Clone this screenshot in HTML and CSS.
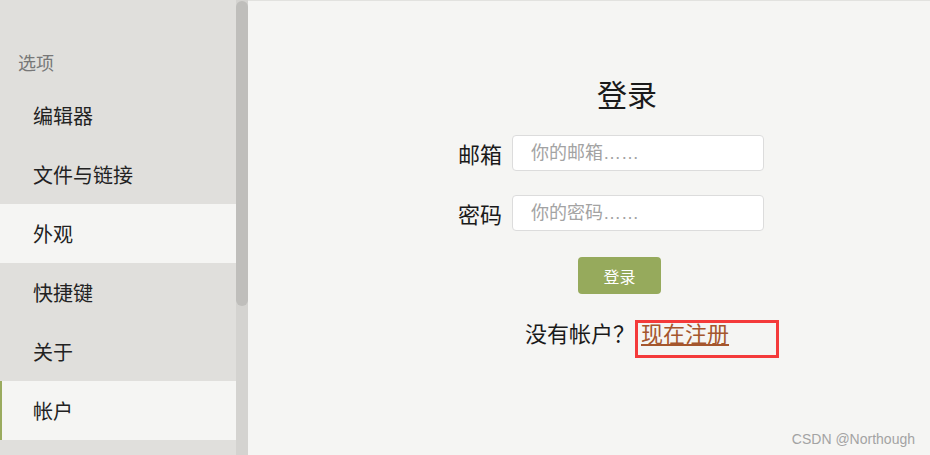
FILE: index.html
```html
<!DOCTYPE html>
<html>
  <head>
    <meta charset="utf-8">
    <title>登录</title>
    <link rel="stylesheet" href="styles.css">
  </head>
  <body>
    <div class="app">
      <div class="sidebar">
        <div class="menu">
          <div class="menu-head">选项</div>
          <div class="item">编辑器</div>
          <div class="item">文件与链接</div>
          <div class="item light">外观</div>
          <div class="item">快捷键</div>
          <div class="item">关于</div>
          <div class="item light active">帐户</div>
        </div>
        <div class="track"><div class="thumb"></div></div>
      </div>
      <div class="main">
        <h1 class="title">登录</h1>
        <div class="row">
          <label class="label">邮箱</label>
          <input class="field" type="text" placeholder="你的邮箱……">
        </div>
        <div class="row second">
          <label class="label">密码</label>
          <input class="field" type="password" placeholder="你的密码……">
        </div>
        <button class="btn">登录</button>
        <p class="signup">没有帐户？<a href="#" class="link">现在注册</a></p>
      </div>
    </div>
    <div class="mark"></div>
    <div class="watermark">CSDN @Northough</div>
  </body>
</html>
```

FILE: styles.css
```css
html, body {
  margin: 0;
  padding: 0;
}
body {
  width: 930px;
  height: 455px;
  overflow: hidden;
  font-family: "Noto Sans CJK SC", "Liberation Sans", sans-serif;
  color: #1f1f1f;
  background: #f5f5f3;
  position: relative;
}
.app {
  display: flex;
  height: 455px;
}
.sidebar {
  display: flex;
  width: 248px;
  flex: none;
}
.menu {
  width: 236px;
  background: #e0dfdc;
}
.menu-head {
  padding: 50px 0 12px 18px;
  height: 24px;
  line-height: 24px;
  font-size: 18px;
  color: #777;
}
.item {
  height: 59px;
  line-height: 59px;
  padding-left: 33px;
  font-size: 20px;
  color: #222;
}
.item.light {
  background: #f5f5f3;
}
.item.active {
  box-shadow: inset 2px 0 0 #9aab5e;
}
.track {
  width: 12px;
  background: #d4d3d0;
}
.thumb {
  margin-top: 1px;
  height: 305px;
  border-radius: 6px;
  background: #bfbebb;
}
.main {
  flex: 1;
  border-top: 1px solid #e2e2df;
  padding-left: 76px;
  display: flex;
  flex-direction: column;
  align-items: center;
}
.title {
  margin: 72px 0 0;
  height: 40px;
  line-height: 40px;
  font-size: 30px;
  font-weight: normal;
  color: #1a1a1a;
}
.row {
  display: flex;
  align-items: center;
  gap: 10px;
  margin: 22px 32px 0 0;
}
.row.second {
  margin-top: 24px;
}
.label {
  font-size: 22px;
  width: 44px;
  color: #1a1a1a;
}
.field {
  box-sizing: border-box;
  width: 252px;
  height: 36px;
  border: 1px solid #dcdcdc;
  border-radius: 4px;
  background: #fff;
  padding: 0 0 0 18px;
  font-family: "Liberation Sans", "Noto Sans CJK SC", sans-serif;
  font-size: 18px;
  outline: none;
}
.field::placeholder {
  color: #a3a3a3;
}
.btn {
  margin: 26px 15px 0 0;
  width: 83px;
  height: 37px;
  border: none;
  border-radius: 4px;
  background: #96aa5c;
  color: #fff;
  font-family: inherit;
  font-size: 16px;
}
.signup {
  margin: 23px 0 0;
  line-height: 30px;
  font-size: 22px;
  color: #1a1a1a;
}
.link {
  margin-left: 6px;
  color: #a5562d;
  text-decoration: underline;
}
.mark {
  position: absolute;
  left: 635px;
  top: 320px;
  width: 138px;
  height: 32px;
  border: 3px solid #f43a3a;
}
.watermark {
  position: absolute;
  right: 15px;
  bottom: 8px;
  font-family: "Liberation Sans", sans-serif;
  font-size: 14px;
  color: #a3a3a3;
}
```
